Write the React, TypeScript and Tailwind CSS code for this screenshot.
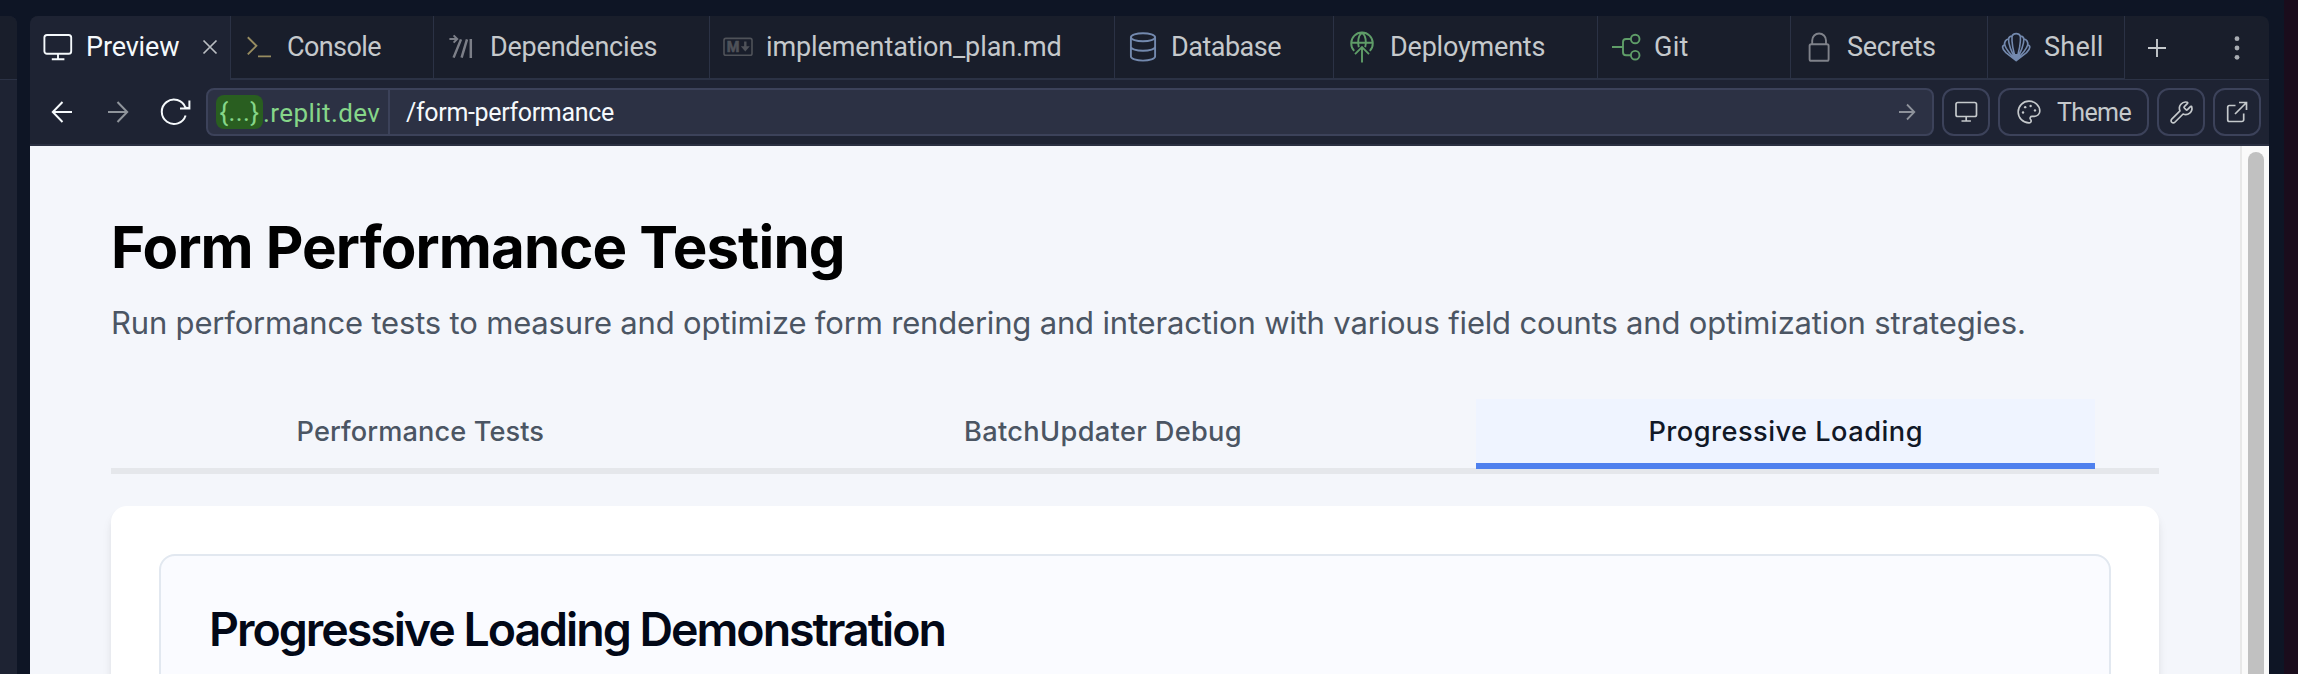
import React from "react";
import { Wrench } from "lucide-react";

type IconProps = { className?: string; children: React.ReactNode };

function TabIcon({ className = "", children }: IconProps) {
  return (
    <svg
      viewBox="0 0 30 30"
      className={`h-[30px] w-[30px] shrink-0 overflow-visible ${className}`}
      fill="none"
      stroke="currentColor"
      strokeWidth={1.9}
    >
      {children}
    </svg>
  );
}

const PreviewIcon = () => (
  <TabIcon className="text-[#f5f9fc]">
    <rect x="1.4" y="3" width="26.8" height="18.8" rx="2.6" />
    <path d="M15 21.8v5.4M8.8 27.2h12.6" />
  </TabIcon>
);

const ConsoleIcon = () => (
  <TabIcon className="text-[#978c60]">
    <path d="M3.8 5.3 12.4 13.8 3.8 22.4M14 24.4h13" />
  </TabIcon>
);

const DependenciesIcon = () => (
  <TabIcon className="text-[#7c7f88]">
    <path d="M2.4 7h8M6.6 3.4 10.2 7l-3.6 3.6" strokeWidth="2" />
    <path d="M14 7.4 6.6 25.6M20 7.4 14.6 25.6M23.8 7v19" strokeWidth="2.5" />
  </TabIcon>
);

const MarkdownIcon = () => (
  <TabIcon className="text-[#4f5259]">
    <rect x="1" y="6.4" width="28" height="16.8" rx="1.8" strokeWidth="1.6" />
    <text
      x="3.8"
      y="19.8"
      fill="currentColor"
      stroke="currentColor"
      strokeWidth="0.6"
      fontSize="14.5"
      fontWeight="700"
      fontFamily="Roboto, sans-serif"
    >
      M
    </text>
    <path d="M22.3 9.6v6" strokeWidth="2.4" />
    <path d="M17.8 14.2h9l-4.5 5.4z" fill="currentColor" stroke="none" />
  </TabIcon>
);

const DatabaseIcon = () => (
  <TabIcon className="text-[#7389ae]">
    <ellipse cx="15" cy="5.2" rx="12.1" ry="4" />
    <path d="M2.9 5.2v19.4c0 2.2 5.4 4 12.1 4s12.1-1.8 12.1-4V5.2M2.9 14.8c0 2.2 5.4 4 12.1 4s12.1-1.8 12.1-4" />
  </TabIcon>
);

const DeploymentsIcon = () => (
  <TabIcon className="text-[#5f9d68]">
    <path d="M7.2 18.8A10.8 10.8 0 1 1 22.8 18.8" />
    <path d="M4.2 10.8h21.6" />
    <path d="M11.8 15.2C10.2 10 11.4 3.2 15 .8c3.6 2.4 4.8 9.2 3.2 14.4" />
    <path d="M15 30.4V15.2M8 22.2l7-7 7 7" />
  </TabIcon>
);

const GitIcon = () => (
  <TabIcon className="text-[#5f9d68]">
    <circle cx="24.2" cy="7" r="4.3" />
    <circle cx="24.2" cy="23.2" r="4.3" />
    <path d="M1 15h11M19.9 7H15a3 3 0 0 0-3 3v10.2a3 3 0 0 0 3 3h4.9" />
  </TabIcon>
);

const LockIcon = () => (
  <TabIcon className="text-[#7f828a]">
    <rect x="5.6" y="12.2" width="19" height="16.6" rx="1.6" />
    <path d="M8.2 12.2V8.4a6.9 6.9 0 0 1 13.8 0v3.8" />
  </TabIcon>
);

const ShellIcon = () => (
  <TabIcon className="text-[#7389ae]">
    <path
      d="M15.2 28.6 4.9 20.6C3 18.8 1.7 17 1.6 15.200c0-1.300.9-2.100 2.100-2.200C3.200 10 4.800 7.400 7.500 7C8 4.800 9.200 4 11 4.100C11.800 2.200 13.300 1.600 15.200 1.600s3.400.6 4.200 2.500C21.200 4 22.400 4.800 22.900 7c2.700.4 4.300 3 3.800 6 1.200.1 2.100.9 2.100 2.200-.1 1.800-1.400 3.600-3.300 5.400z"
      strokeWidth="1.7"
      strokeLinejoin="round"
    />
    <path
      d="M3.700 13C5 17 10 23 15.200 28M7.500 7C7.500 12 11 21 15.200 28M11 4.100C10.600 10 12.500 20 15.200 28M19.400 4.100C19.800 10 17.900 20 15.200 28M22.900 7C22.900 12 19.400 21 15.200 28M26.700 13C25.400 17 20.400 23 15.200 28"
      strokeWidth="1.6"
    />
    <path d="M9.500 24.200 13 22h4.400l3.500 2.200-5.700 4.400z" fill="currentColor" stroke="none" />
  </TabIcon>
);

type Tab = { label: string; icon: React.ReactNode; width: string; tracking: string };

const tabs: Tab[] = [
  { label: "Console", icon: <ConsoleIcon />, width: "w-[203px]", tracking: "tracking-[-0.6px]" },
  { label: "Dependencies", icon: <DependenciesIcon />, width: "w-[276px]", tracking: "tracking-[-0.22px]" },
  { label: "implementation_plan.md", icon: <MarkdownIcon />, width: "w-[405px]", tracking: "tracking-[-0.1px]" },
  { label: "Database", icon: <DatabaseIcon />, width: "w-[219px]", tracking: "tracking-[-0.5px]" },
  { label: "Deployments", icon: <DeploymentsIcon />, width: "w-[264px]", tracking: "tracking-[-0.2px]" },
  { label: "Git", icon: <GitIcon />, width: "w-[193px]", tracking: "tracking-[0.27px]" },
  { label: "Secrets", icon: <LockIcon />, width: "w-[197px]", tracking: "tracking-[-0.25px]" },
  { label: "Shell", icon: <ShellIcon />, width: "w-[137px]", tracking: "tracking-[0.25px]" },
];

function TabBar() {
  return (
    <div className="flex h-16 shrink-0 bg-[#191e2b] text-[27px] leading-[62px] text-[#c5c9cc]">
      <div className="flex w-[201px] shrink-0 items-center border-r border-[#2b3245] bg-[#1e2333] pb-0.5 pl-[13px] text-[#f5f9fc]">
        <PreviewIcon />
        <span className="ml-[13px] w-[94px] tracking-[-0.15px]">Preview</span>
        <svg
          viewBox="0 0 16 16"
          className="ml-[22px] h-4 w-4 text-[#b9bdc2]"
          fill="none"
          stroke="currentColor"
          strokeWidth="1.7"
        >
          <path d="M1.5 1.5l13 13M14.5 1.5l-13 13" />
        </svg>
      </div>
      {tabs.map((t) => (
        <div
          key={t.label}
          className={`flex shrink-0 items-center border-r border-b-2 border-[#2b3245] pl-[13px] ${t.width}`}
        >
          {t.icon}
          <span className={`ml-[13px] ${t.tracking}`}>{t.label}</span>
        </div>
      ))}
      <div className="flex flex-1 items-center justify-between border-b border-[#2b3245] pt-px pr-[29px] pl-[23px]">
        <svg
          viewBox="0 0 18 18"
          className="h-[18px] w-[18px] text-[#c5c9cc]"
          fill="none"
          stroke="currentColor"
          strokeWidth="1.9"
        >
          <path d="M9 0v18M0 9h18" />
        </svg>
        <svg viewBox="0 0 6 24" className="h-6 w-1.5 text-[#a8acb2]" fill="currentColor">
          <circle cx="3" cy="2.7" r="2.4" />
          <circle cx="3" cy="12" r="2.4" />
          <circle cx="3" cy="21.3" r="2.4" />
        </svg>
      </div>
    </div>
  );
}

function AddressBar() {
  return (
    <div className="flex h-12 w-[1728px] items-center rounded-lg border-2 border-[#3c425a] bg-[#2c3144] text-[26px]">
      <div className="flex h-full w-[182px] items-center border-r-2 border-[#3c425a] pl-2 text-[#86d689]">
        <span className="flex h-[34px] w-[47px] items-center justify-center rounded-lg bg-[#295e20] tracking-[0.4px]">
          {"{...}"}
        </span>
        <span className="pt-0.5 tracking-[0.42px]">.replit.dev</span>
      </div>
      <span className="ml-4 flex-1 pt-0.5 text-[25px] tracking-[-0.34px] text-[#f5f9fc]">/form-performance</span>
      <svg
        viewBox="0 0 18 18"
        className="mr-4 h-[18px] w-[18px] text-[#8e929b]"
        fill="none"
        stroke="currentColor"
        strokeWidth="1.8"
      >
        <path d="M1 9h15M9 1.5 16.3 9 9 16.5" />
      </svg>
    </div>
  );
}

const toolButton =
  "flex h-12 shrink-0 items-center justify-center rounded-xl border-2 border-[#3c425a] text-[#c5c9cc]";

function Toolbar() {
  return (
    <div className="flex h-[66px] shrink-0 items-center border-b-2 border-[#2b3042] bg-[#1e2333] pr-2">
      <div className="flex w-44 items-center pl-5">
        <svg viewBox="0 0 24 24" className="h-6 w-6 text-[#f5f9fc]" fill="none" stroke="currentColor" strokeWidth="2">
          <path d="M22 12H2.8M12.5 2 2.8 12l9.7 10" />
        </svg>
        <svg
          viewBox="0 0 24 24"
          className="ml-8 h-6 w-6 text-[#8f949b]"
          fill="none"
          stroke="currentColor"
          strokeWidth="2"
        >
          <path d="M2 12h19.2M11.5 2l9.7 10-9.7 10" />
        </svg>
        <svg
          viewBox="0 0 32 28"
          className="ml-[30px] h-7 w-8 text-[#f5f9fc]"
          fill="none"
          stroke="currentColor"
          strokeWidth="2"
        >
          <path d="M25.6 17.5A12.2 12.2 0 1 1 25.4 9.5M29.4 2.4v8.2H20M25.4 9.5l3.6.7" />
        </svg>
      </div>
      <AddressBar />
      <div className={`ml-2 w-12 ${toolButton}`}>
        <svg viewBox="0 0 24 24" className="h-6 w-6" fill="none" stroke="currentColor" strokeWidth="1.7">
          <rect x="2" y="2.5" width="20.5" height="14" rx="1.8" />
          <path d="M12.2 16.5V21M7.5 21h9.4" />
        </svg>
      </div>
      <div className={`ml-2 w-[151px] ${toolButton}`}>
        <svg viewBox="0 0 24 24" className="h-[26px] w-[26px]" fill="none" stroke="currentColor" strokeWidth="1.5">
          <path d="M12 22a1 1 0 0 1 0-20 10 9 0 0 1 10 9 5 5 0 0 1-5 5h-2.250a1.750 1.750 0 0 0-1.400 2.800l.3.4a1.750 1.750 0 0 1-1.400 2.800z" />
          <g fill="currentColor" stroke="none">
            <circle cx="13.5" cy="6.5" r="1.1" />
            <circle cx="17.5" cy="10.5" r="1.1" />
            <circle cx="6.5" cy="12.5" r="1.1" />
            <circle cx="8.5" cy="7.5" r="1.1" />
          </g>
        </svg>
        <span className="ml-[15px] pt-0.5 text-[25px] tracking-[-0.6px]">Theme</span>
      </div>
      <div className={`ml-2 w-12 ${toolButton}`}>
        <Wrench size={25} strokeWidth={1.6} />
      </div>
      <div className={`ml-2 w-12 ${toolButton}`}>
        <svg viewBox="0 0 24 24" className="h-6 w-6" fill="none" stroke="currentColor" strokeWidth="1.7">
          <path d="M10.5 5.5H4.500a1.800 1.800 0 0 0-1.800 1.800v12.400a1.800 1.800 0 0 0 1.800 1.800h12.400a1.800 1.800 0 0 0 1.800-1.800V13.500M14 2.500h7.500V10M21.500 2.500 10 14" />
        </svg>
      </div>
    </div>
  );
}

const sections = [
  { label: "Performance Tests", style: "text-[#4b5563] tracking-[0.1px]", active: false },
  { label: "BatchUpdater Debug", style: "text-[#4b5563] tracking-[0.34px]", active: false },
  { label: "Progressive Loading", style: "text-[#111827] tracking-[0.48px]", active: true },
];

function Page() {
  return (
    <div className="flex min-h-0 flex-1 bg-[#f4f6fb] font-[Inter,sans-serif]">
      <main className="min-w-0 flex-1 overflow-hidden px-[81px] pt-[65px]">
        <h1 className="text-[58.2px] leading-[72px] font-bold tracking-[-0.89px] whitespace-nowrap text-black">
          Form Performance Testing
        </h1>
        <p className="mt-4 text-[31px] leading-[48px] tracking-[-0.175px] whitespace-nowrap text-[#4b5563]">
          Run performance tests to measure and optimize form rendering and interaction with various field counts and
          optimization strategies.
        </p>
        <div className="mt-[52px] flex h-[75px] border-b-[6px] border-[#e5e7eb]">
          {sections.map((s) => (
            <div key={s.label} className="h-[70px] flex-1 pr-16">
              <div
                className={`h-[70px] border-b-[6px] text-center text-[27.2px] leading-[66px] font-medium ${s.style} ${
                  s.active ? "relative border-[#4f80ee] bg-[#eff4ff]" : "border-transparent"
                }`}
              >
                {s.label}
              </div>
            </div>
          ))}
        </div>
        <section className="mt-8 h-80 rounded-2xl bg-white px-12 pt-12 shadow-[0_8px_12px_-2px_rgba(0,0,0,0.1),0_4px_8px_-4px_rgba(0,0,0,0.1)]">
          <div className="h-80 rounded-2xl border-2 border-[#e2e8f0] bg-[#fafbff] px-12 pt-[49px]">
            <h2 className="text-[46.5px] leading-[48px] font-semibold tracking-[-2.02px] whitespace-nowrap text-[#020817]">
              Progressive Loading Demonstration
            </h2>
          </div>
        </section>
      </main>
      <div className="w-[29px] border-l-2 border-[#e8e8e8] bg-[#fafafa] pt-1.5 pl-1.5">
        <div className="h-[600px] w-4 rounded-full bg-[#c1c1c1]" />
      </div>
    </div>
  );
}

export default function App() {
  return (
    <div className="flex h-[674px] w-[2298px] overflow-hidden bg-[#0e1525] pt-4 font-[Roboto,sans-serif]">
      <div className="w-[17px] overflow-hidden rounded-tr-lg bg-[#1e2333]">
        <div className="h-16 border-b border-[#2b3245] bg-[#191e2b]" />
      </div>
      <div className="ml-[13px] flex w-[2239px] flex-col overflow-hidden rounded-t-lg">
        <TabBar />
        <Toolbar />
        <Page />
      </div>
      <div className="-mt-4 ml-[15px] flex-1 bg-[#1a0c1c]" />
    </div>
  );
}
